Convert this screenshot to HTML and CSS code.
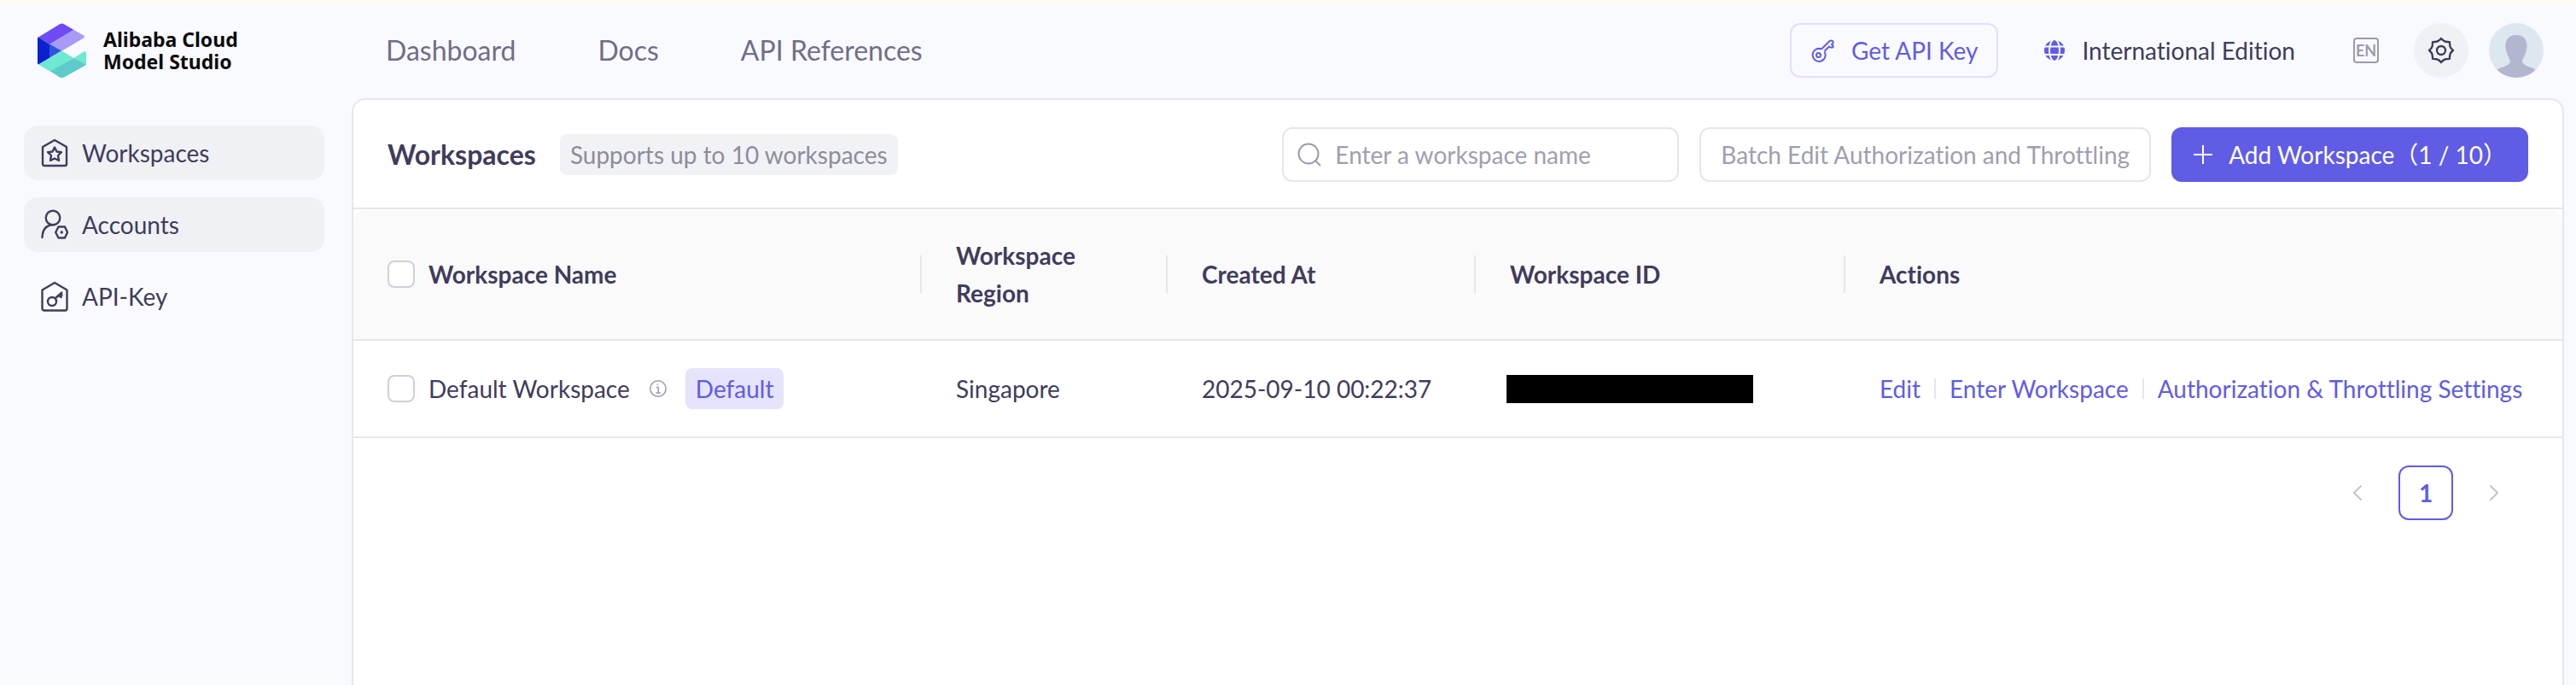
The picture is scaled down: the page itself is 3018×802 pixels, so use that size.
FILE: index.html
```html
<!DOCTYPE html>
<html lang="en">
<head>
<meta charset="utf-8">
<title>Workspaces</title>
<link rel="stylesheet" href="styles.css">
</head>
<body>
<div class="app">
  <header class="header">
    <a class="brand" href="#">
      <svg class="brand-mark" viewBox="0 0 57 64" aria-hidden="true">
        <path d="M1 16.500L26 1.200Q28.500-.3 31 1.200L42.500 8L14 25Z" fill="#6f4bf6"/>
        <path d="M42.500 8L54 14.500Q56 16 54 17.500L28 33L14 25Z" fill="#a79bf7"/>
        <path d="M0 17.500Q0 16.500 1 16.500L14 25V41L1 48.500Q0 48 0 47Z" fill="#0d20d0"/>
        <path d="M14 24.500L28 32.500L14 41Z" fill="#2f55dc"/>
        <path d="M1 48.500L28 32.500L42.500 41L15.500 57Z" fill="#6ee9d1"/>
        <path d="M42.500 41L54 33.500Q57 32.500 57 35V48Q57 49 56 49.500Z" fill="#6ee9d1"/>
        <path d="M42.500 41L57 49L31 63.500Q28.500 64.500 26 63.500L15 56.500Z" fill="#5fcac8"/>
      </svg>
      <span class="brand-name">Alibaba Cloud<br>Model Studio</span>
    </a>
    <nav class="topnav">
      <a href="#">Dashboard</a>
      <a href="#">Docs</a>
      <a href="#">API References</a>
    </nav>
    <div class="header-tools">
      <button class="btn btn-key" type="button">
        <svg class="icon-key" viewBox="0 0 28 28" aria-hidden="true"><g fill="none" stroke="currentColor" stroke-width="2" stroke-linejoin="round"><path d="M13 12.500L22 3.500Q24.500 1.500 26.500 3.500V5.500L25 7L26.500 8.500V10.500H23.500L22 9.500L16.500 15"/><path d="M13 12.500A7.500 7.500 0 1 0 16.500 15.500"/><circle cx="9.500" cy="19.500" r="2.500"/></g></svg>
        Get API Key
      </button>
      <button class="edition" type="button">
        <svg class="icon-globe" viewBox="0 0 24 24" aria-hidden="true"><circle cx="12" cy="12" r="12" fill="#605ce5"/><g fill="none" stroke="#f9faff" stroke-width="2"><path d="M0 7.500H24M0 17H24"/><ellipse cx="12" cy="12" rx="6" ry="13"/></g></svg>
        International Edition
      </button>
      <button class="lang" type="button" aria-label="Language">EN</button>
      <button class="round" type="button" aria-label="Settings">
        <svg class="icon-gear" viewBox="0 0 32 32" aria-hidden="true"><g fill="none" stroke="currentColor" stroke-width="2.400" stroke-linejoin="round"><path d="M16 2Q18.500 5 20.500 5.500T25.900 6.100Q26 9.500 26.500 11.500T30 16Q27 18.500 26.500 20.500T25.900 25.900Q22.500 26 20.500 26.500T16 30Q13.500 27 11.500 26.500T6.100 25.900Q6 22.500 5.500 20.500T2 16Q5 13.500 5.500 11.500T6.100 6.100Q9.500 6 11.500 5.500T16 2Z"/><circle cx="16" cy="16" r="5"/></g></svg>
      </button>
      <button class="avatar" type="button" aria-label="Account">
        <svg viewBox="0 0 64 64" aria-hidden="true"><path d="M32 14C41 14 45 20 44.500 28C44 36 40 40 39 45C40 50 48 51 54 54V64H10V54C16 51 24 50 25 45C24 40 20 36 19.500 28C19 20 23 14 32 14Z" fill="#b2b7cf"/></svg>
      </button>
    </div>
  </header>

  <div class="body">
    <aside class="sidebar">
      <nav class="menu">
        <a class="menu-item filled" href="#">
          <svg viewBox="0 0 32 36" aria-hidden="true"><g fill="none" stroke="currentColor" stroke-width="2.400" stroke-linejoin="round"><path d="M16 3L30 11V31Q30 33 28 33H4Q2 33 2 31V11Z"/><path d="M16 11.500L18.500 16.500L24 17.200L20 21L21 27L16 24.500L11 27L12 21L8 17.200L13.500 16.500Z"/></g></svg>
          Workspaces
        </a>
        <a class="menu-item filled" href="#">
          <svg viewBox="0 0 32 36" aria-hidden="true"><g fill="none" stroke="currentColor" stroke-width="2.400" stroke-linecap="round" stroke-linejoin="round"><circle cx="14" cy="10" r="8.300"/><path d="M1.500 33Q2 19 14 18.300"/><path d="M20.500 20.500H28L31 27L28 33.500H20.500L17.200 27Z"/></g><circle cx="24.200" cy="27" r="1.700" fill="currentColor"/></svg>
          Accounts
        </a>
        <a class="menu-item" href="#">
          <svg viewBox="0 0 32 36" aria-hidden="true"><g fill="none" stroke="currentColor" stroke-width="2.400" stroke-linejoin="round"><path d="M16 2L30.500 10.500V32Q30.500 34.500 28.500 34.500H3.500Q1.500 34.500 1.500 32V10.500Z"/><circle cx="13" cy="24" r="5"/><path d="M16.500 20.500L25 13M20.500 17L24.500 19.500M23 14.500L25 17.500"/></g></svg>
          API-Key
        </a>
      </nav>
    </aside>

    <main class="panel">
      <div class="toolbar">
        <h1 class="title">Workspaces</h1>
        <span class="tag tag-grey">Supports up to 10 workspaces</span>
        <div class="toolbar-actions">
          <label class="search">
            <svg viewBox="0 0 28 28" aria-hidden="true"><g fill="none" stroke="currentColor" stroke-width="2" stroke-linecap="round"><circle cx="13" cy="13" r="11.500"/><path d="M21 21L26.500 26.500"/></g></svg>
            <input type="text" placeholder="Enter a workspace name" aria-label="Workspace name">
          </label>
          <button class="btn btn-plain" type="button">Batch Edit Authorization and Throttling</button>
          <button class="btn btn-primary" type="button">
            <svg viewBox="0 0 24 24" aria-hidden="true"><path d="M12 1V23M1 12H23" fill="none" stroke="currentColor" stroke-width="2"/></svg>
            <span>Add Workspace（1 / 10）</span>
          </button>
        </div>
      </div>

      <table class="table">
        <colgroup><col class="c-name"><col class="c-region"><col class="c-created"><col class="c-id"><col></colgroup>
        <thead>
          <tr>
            <th scope="col"><span class="cell"><input class="check" type="checkbox" id="all"><label for="all">Workspace Name</label></span></th>
            <th scope="col"><span class="cell">Workspace Region</span></th>
            <th scope="col"><span class="cell">Created At</span></th>
            <th scope="col"><span class="cell">Workspace ID</span></th>
            <th scope="col">Actions</th>
          </tr>
        </thead>
        <tbody>
          <tr>
            <td>
              <span class="cell"><input class="check" type="checkbox" id="row1"><label for="row1">Default Workspace</label>
              <svg class="icon-info" viewBox="0 0 20 20" aria-hidden="true"><g fill="none" stroke="currentColor"><circle cx="10" cy="10" r="9.200" stroke-width="1.500"/><path d="M8 8.500H10.300V15M7.500 15H13M9.500 4.500V6" stroke-width="1.500"/></g></svg>
              <span class="tag tag-violet">Default</span></span>
            </td>
            <td>Singapore</td>
            <td>2025-09-10 00:22:37</td>
            <td class="id-cell"><span class="redacted"></span></td>
            <td><span class="links"><a href="#">Edit</a><a href="#">Enter Workspace</a><a href="#">Authorization &amp; Throttling Settings</a></span></td>
          </tr>
        </tbody>
      </table>

      <nav class="pager" aria-label="Pagination">
        <button type="button" aria-label="Previous page" disabled><svg viewBox="0 0 10 18" aria-hidden="true"><path d="M9 1L1 9L9 17" fill="none" stroke="currentColor" stroke-width="2" stroke-linecap="round"/></svg></button>
        <button class="current" type="button">1</button>
        <button type="button" aria-label="Next page" disabled><svg viewBox="0 0 10 18" aria-hidden="true"><path d="M1 1L9 9L1 17" fill="none" stroke="currentColor" stroke-width="2" stroke-linecap="round"/></svg></button>
      </nav>
    </main>
  </div>
</div>
</body>
</html>
```

FILE: styles.css
```css
* { box-sizing: border-box; }

body {
  margin: 0;
  background: #f9faff;
  color: #403c5c;
  font: 28px/44px Lato, "Noto Sans CJK SC", sans-serif;
  font-variant-ligatures: none;
}

a { color: inherit; text-decoration: none; }
button { font: inherit; font-variant-ligatures: none; color: inherit; border: 0; padding: 0; background: none; white-space: nowrap; }
svg { display: block; flex: none; }

.app {
  display: flex;
  flex-direction: column;
  min-height: 100vh;
  border-top: 3px solid #fffde8;
}

/* Header */
.header {
  display: flex;
  align-items: center;
  height: 112px;
  padding: 0 38px 0 44px;
}
.brand { display: flex; align-items: center; gap: 20px; width: 408px; }
.brand-mark { width: 57px; height: 64px; }
.brand-name { font: bold 23px/26px "Noto Sans", sans-serif; color: #0a0a0a; }
.topnav { display: flex; gap: 96px; font-size: 32px; color: #716d89; }
.header-tools { display: flex; align-items: center; margin-left: auto; }

.btn {
  display: flex;
  align-items: center;
  height: 64px;
  border-radius: 12px;
  padding: 0 22px;
}
.btn-key { gap: 20px; border: 2px solid #e2defc; color: #605ce5; }
.icon-key { width: 28px; height: 28px; }
.edition { display: flex; align-items: center; gap: 20px; margin-left: 54px; }
.icon-globe { width: 24px; height: 24px; }
.lang {
  width: 30px;
  height: 30px;
  margin: 0 41px 0 68px;
  border: 2px solid #9c99ae;
  border-radius: 4px;
  color: #9c99ae;
  font: bold 18px/26px Lato, sans-serif;
}
.round, .avatar {
  display: flex;
  align-items: center;
  justify-content: center;
  width: 64px;
  height: 64px;
  border-radius: 50%;
  overflow: hidden;
}
.round { background: #f0f1f5; }
.icon-gear { width: 32px; height: 32px; }
.avatar { margin-left: 24px; background: #dde7f0; }
.avatar svg { width: 64px; height: 64px; }

/* Sidebar */
.body { display: flex; flex: 1; }
.sidebar { flex: none; width: 412px; padding: 32px 32px 0 28px; }
.menu { display: flex; flex-direction: column; gap: 20px; }
.menu-item {
  display: flex;
  align-items: center;
  gap: 16px;
  height: 64px;
  padding: 0 20px;
  border-radius: 16px;
}
.menu-item svg { width: 32px; height: 36px; }
.filled { background: #f0f1f5; }

/* Panel */
.panel {
  flex: 1;
  min-width: 0;
  margin-right: 14px;
  background: #fff;
  border: 2px solid #e6e6ec;
  border-bottom: 0;
  border-radius: 16px 16px 0 0;
}
.toolbar {
  display: flex;
  align-items: center;
  padding: 32px 40px 30px;
  border-bottom: 2px solid #e6e6ec;
}
.title { margin: 0 28px 0 0; font-size: 32px; font-weight: 700; }
.tag {
  display: inline-block;
  height: 48px;
  padding: 0 12px;
  border-radius: 8px;
  line-height: 48px;
  white-space: nowrap;
}
.tag-grey { background: #f1f2f5; color: #8e8c9c; }
.tag-violet { background: #e6e3fd; color: #605ce5; }
.toolbar-actions { display: flex; gap: 24px; margin-left: auto; }
.search {
  display: flex;
  align-items: center;
  gap: 16px;
  width: 465px;
  height: 64px;
  padding: 0 16px;
  border: 2px solid #e6e6ec;
  border-radius: 12px;
  color: #9c99ae;
}
.search svg { width: 28px; height: 28px; }
.search input {
  flex: 1;
  min-width: 0;
  border: 0;
  padding: 0;
  outline: 0;
  background: none;
  color: #403c5c;
  font: inherit;
}
.search input::placeholder { color: #a09eb1; opacity: 1; }
.btn-plain { padding: 0 23px; border: 2px solid #e6e6ec; color: #a09eb1; }
.btn-primary { gap: 18px; padding: 0 25px; background: #605ce5; color: #fff; }
.btn-primary svg { width: 24px; height: 24px; }

/* Table */
.table { width: 100%; table-layout: fixed; border-spacing: 0; }
.c-name { width: 666px; }
.c-region { width: 288px; }
.c-created { width: 361px; }
.c-id { width: 433px; }
.table th, .table td {
  padding: 32px 40px;
  border-bottom: 2px solid #e6e6ec;
  text-align: left;
  vertical-align: middle;
}
.table th { background: #fafafb; font-weight: 700; }
.table th:not(:last-child) {
  padding-right: 0;
  background: linear-gradient(#e6e6ec, #e6e6ec) right center / 2px 44px no-repeat #fafafb;
}
.table th:nth-child(2) { padding-right: 80px; }
.table th:first-child { border-top-left-radius: 16px; }
.table th:last-child { border-top-right-radius: 16px; }
.table td { padding-right: 0; white-space: nowrap; }
.table .id-cell { padding-left: 36px; }
.cell { display: flex; align-items: center; }
.check {
  appearance: none;
  flex: none;
  width: 32px;
  height: 32px;
  margin: 0 16px 0 0;
  border: 2px solid #cfcfdc;
  border-radius: 8px;
  background: #fff;
}
.icon-info { width: 20px; height: 20px; margin: 0 22px 0 23px; color: #9c99ae; }
.redacted { display: block; width: 289px; height: 33px; background: #000; }
.links { display: flex; align-items: center; color: #605ce5; }
.links a + a { margin-left: 16px; padding-left: 18px; background: linear-gradient(#e6e6ec, #e6e6ec) left center / 2px 24px no-repeat; }

/* Pagination */
.pager { display: flex; justify-content: flex-end; gap: 16px; padding: 32px 48px; }
.pager button {
  display: flex;
  align-items: center;
  justify-content: center;
  width: 64px;
  height: 64px;
  border-radius: 12px;
  color: #c5c4cf;
}
.pager svg { width: 10px; height: 18px; }
.pager .current { border: 2px solid #605ce5; color: #605ce5; font-weight: 700; }
```
